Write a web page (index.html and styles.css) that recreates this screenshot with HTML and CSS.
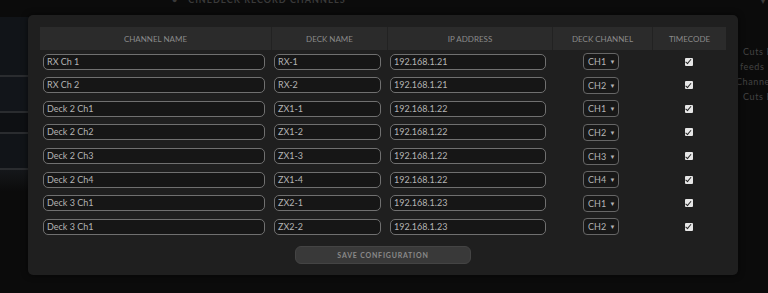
FILE: index.html
```html
<!DOCTYPE html>
<html>
<head>
<meta charset="utf-8">
<link rel="stylesheet" href="styles.css">
</head>
<body>
<div class="page">
  <aside class="side">
    <div class="side-top"></div>
    <div class="panel p1"></div>
    <div class="panel p2"></div>
    <div class="panel p3"></div>
    <div class="panel p4"></div>
    <div class="side-fade"></div>
  </aside>
  <main class="center">
    <div class="title"><span class="bullet">•</span>CINEDECK RECORD CHANNELS</div>
  </main>
  <aside class="right">
    <div class="caret">▾</div>
    <p class="l1">Cuts Edit</p>
    <p class="l2">feeds</p>
    <p class="l3">Channels</p>
    <p class="l1">Cuts Edit</p>
  </aside>
</div>

<div class="modal">
  <div class="table">
    <div class="th">CHANNEL NAME</div>
    <div class="th">DECK NAME</div>
    <div class="th">IP ADDRESS</div>
    <div class="th">DECK CHANNEL</div>
    <div class="th">TIMECODE</div>

    <div class="td"><div class="inp">RX Ch 1</div></div>
    <div class="td"><div class="inp">RX-1</div></div>
    <div class="td"><div class="inp">192.168.1.21</div></div>
    <div class="td c"><div class="sel">CH1 <span class="arr">▼</span></div></div>
    <div class="td c"><span class="chk"></span></div>

    <div class="td"><div class="inp">RX Ch 2</div></div>
    <div class="td"><div class="inp">RX-2</div></div>
    <div class="td"><div class="inp">192.168.1.21</div></div>
    <div class="td c"><div class="sel">CH2 <span class="arr">▼</span></div></div>
    <div class="td c"><span class="chk"></span></div>

    <div class="td"><div class="inp">Deck 2 Ch1</div></div>
    <div class="td"><div class="inp">ZX1-1</div></div>
    <div class="td"><div class="inp">192.168.1.22</div></div>
    <div class="td c"><div class="sel">CH1 <span class="arr">▼</span></div></div>
    <div class="td c"><span class="chk"></span></div>

    <div class="td"><div class="inp">Deck 2 Ch2</div></div>
    <div class="td"><div class="inp">ZX1-2</div></div>
    <div class="td"><div class="inp">192.168.1.22</div></div>
    <div class="td c"><div class="sel">CH2 <span class="arr">▼</span></div></div>
    <div class="td c"><span class="chk"></span></div>

    <div class="td"><div class="inp">Deck 2 Ch3</div></div>
    <div class="td"><div class="inp">ZX1-3</div></div>
    <div class="td"><div class="inp">192.168.1.22</div></div>
    <div class="td c"><div class="sel">CH3 <span class="arr">▼</span></div></div>
    <div class="td c"><span class="chk"></span></div>

    <div class="td"><div class="inp">Deck 2 Ch4</div></div>
    <div class="td"><div class="inp">ZX1-4</div></div>
    <div class="td"><div class="inp">192.168.1.22</div></div>
    <div class="td c"><div class="sel">CH4 <span class="arr">▼</span></div></div>
    <div class="td c"><span class="chk"></span></div>

    <div class="td"><div class="inp">Deck 3 Ch1</div></div>
    <div class="td"><div class="inp">ZX2-1</div></div>
    <div class="td"><div class="inp">192.168.1.23</div></div>
    <div class="td c"><div class="sel">CH1 <span class="arr">▼</span></div></div>
    <div class="td c"><span class="chk"></span></div>

    <div class="td"><div class="inp">Deck 3 Ch1</div></div>
    <div class="td"><div class="inp">ZX2-2</div></div>
    <div class="td"><div class="inp">192.168.1.23</div></div>
    <div class="td c"><div class="sel">CH2 <span class="arr">▼</span></div></div>
    <div class="td c"><span class="chk"></span></div>
  </div>
  <div class="actions">
    <button class="save">SAVE CONFIGURATION</button>
  </div>
</div>
</body>
</html>
```
FILE: styles.css
```css
* { box-sizing: border-box; }
html, body {
  margin: 0;
  padding: 0;
  width: 768px;
  height: 293px;
  overflow: hidden;
  background: #0b0b0b;
  font-family: Lato, "Open Sans", sans-serif;
}
.page {
  display: grid;
  grid-template-columns: 60px 1fr 32px;
  height: 293px;
}
.side {
  display: flex;
  flex-direction: column;
}
.side-top { height: 17px; background: #0b0b0b; }
.panel {
  background: #111418;
  border-bottom: 2px solid #2a2c2f;
}
.p1 { height: 60px; }
.p2 { height: 36px; background: #12151a; }
.p3 { height: 21px; background: #0e1013; }
.p4 { height: 36px; background: #111418; }
.side-fade {
  height: 22px;
  background: linear-gradient(#15171a, #0b0b0b);
}
.center {
  overflow: hidden;
}
.title {
  margin: -5px 0 0 112px;
  color: #3a3a3a;
  font-size: 9px;
  font-weight: 700;
  letter-spacing: 1px;
  line-height: 10px;
}
.bullet { margin-right: 10px; }
.right {
  overflow: hidden;
  color: #434343;
  font-size: 9px;
  white-space: nowrap;
}
.caret {
  text-align: right;
  font-size: 8px;
  line-height: 8px;
  margin-top: -3px;
  padding-right: 3px;
  height: 47px;
  color: #3a3a3a;
}
.right p {
  margin: 0;
  line-height: 15px;
  letter-spacing: 0.6px;
}
.right .l1 { padding-left: 7px; }
.right .l2 { padding-left: 4px; }
.right .l3 { padding-left: 0; }

.modal {
  position: absolute;
  left: 28px;
  top: 15px;
  width: 710px;
  height: 260px;
  background: #1f1f1f;
  border-radius: 5px;
  padding: 12px;
  box-shadow: 0 0 6px rgba(0,0,0,0.6);
}
.table {
  display: grid;
  grid-template-columns: 231px 116px 165px 100px 74px;
  grid-template-rows: 23px;
  grid-auto-rows: 23.57px;
}
.th {
  background: #2b2b2b;
  color: #8a8a8a;
  font-size: 8px;
  display: flex;
  align-items: center;
  justify-content: center;
  border-left: 1px solid #222;
}
.th:first-child { border-left: none; }
.td {
  display: flex;
  align-items: center;
  padding: 0 6px 0 3px;
}
.td.c { justify-content: center; padding: 0; }
.inp {
  width: 100%;
  height: 16px;
  border: 1px solid #707070;
  border-radius: 5px;
  background: #161616;
  color: #b4b4b4;
  font-size: 9px;
  line-height: 14px;
  padding-left: 3px;
  white-space: nowrap;
}
.sel {
  width: 36px;
  height: 17px;
  border: 1px solid #666;
  border-radius: 4px;
  background: #181818;
  color: #b4b4b4;
  font-size: 9px;
  line-height: 15px;
  padding-left: 4px;
  margin-right: 2px;
  white-space: nowrap;
}
.arr {
  font-size: 6px;
  vertical-align: 1px;
  margin-left: 1px;
}
.chk {
  position: relative;
  display: block;
  width: 8px;
  height: 8px;
  background: #e6e6e6;
  border-radius: 1px;
  margin-right: 1px;
}
.chk::after {
  content: "";
  position: absolute;
  left: 2.5px;
  top: 0.5px;
  width: 2px;
  height: 4.5px;
  border: solid #222;
  border-width: 0 1.5px 1.5px 0;
  transform: rotate(40deg);
}
.actions {
  display: flex;
  justify-content: center;
  padding-top: 7px;
}
.save {
  width: 176px;
  height: 18px;
  border: 1px solid #444;
  border-radius: 6px;
  background: #393939;
  color: #8a8a8a;
  font-family: Lato, "Open Sans", sans-serif;
  font-weight: 700;
  font-size: 7px;
  letter-spacing: 0.8px;
  padding: 0;
}
```
